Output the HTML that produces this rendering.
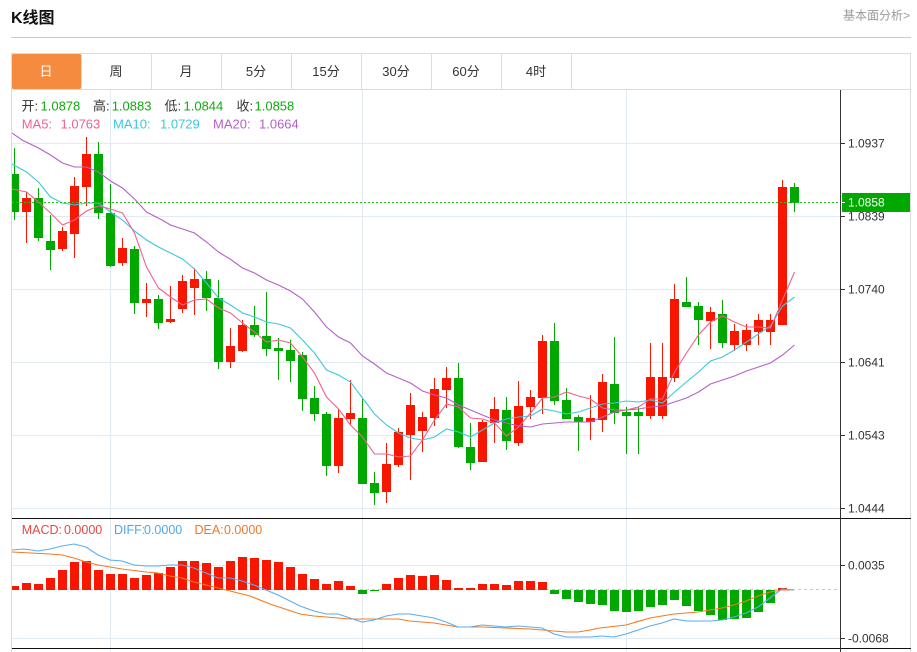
<!DOCTYPE html>
<html lang="zh">
<head>
<meta charset="utf-8">
<title>K线图</title>
<style>
html,body{margin:0;padding:0;background:#fff;width:917px;height:652px;overflow:hidden}
svg{display:block}
text{font-family:"Liberation Sans","Noto Sans CJK SC",sans-serif}
.ax{font-size:12px;fill:#333}
.tab{font-size:13px;fill:#333;text-anchor:middle}
.i{font-size:13px}
.m{font-size:12.5px}
</style>
</head>
<body>
<svg width="917" height="652" viewBox="0 0 917 652" xmlns="http://www.w3.org/2000/svg">
<defs><clipPath id="c"><rect x="12" y="90" width="828" height="562"/></clipPath></defs>

<text x="11" y="23" font-size="16" font-weight="700" fill="#111">K线图</text>
<text x="843" y="19.5" font-size="12" fill="#999">基本面分析&gt;</text>
<path d="M11 37.5H911" stroke="#ccc" fill="none"/>

<!-- tabs -->
<path d="M11.5 652V53.5H910.5V652M12 89.5H910.5M81.5 54V89M151.5 54V89M221.5 54V89M291.5 54V89M361.5 54V89M431.5 54V89M501.5 54V89M571.5 54V89" stroke="#dcdcdc" fill="none"/>
<rect x="12" y="54" width="69" height="35" rx="1.5" fill="#f58b3e"/>
<text class="tab" x="46" y="76" style="fill:#fff">日</text>
<text class="tab" x="116" y="76">周</text>
<text class="tab" x="186" y="76">月</text>
<text class="tab" x="256" y="76">5分</text>
<text class="tab" x="326" y="76">15分</text>
<text class="tab" x="396" y="76">30分</text>
<text class="tab" x="466" y="76">60分</text>
<text class="tab" x="536" y="76">4时</text>

<!-- grid -->
<path d="M12 143.5H840M12 216.5H840M12 289.5H840M12 362.5H840M12 435.5H840M12 508.5H840M12 565.5H840M12 638.5H840M110.5 90V652M362.5 90V652M626.5 90V652" stroke="#e2ebf2" fill="none"/>

<g clip-path="url(#c)" fill="none">
<!-- red candles -->
<path stroke="#f71700" stroke-width="1" d="M26.5 192V243M62.5 227V251M74.5 177V258M86.5 137V206M122.5 238V266M146.5 283V317M170.5 286V323M182.5 275V313M194.5 268V315M230.5 328V368M242.5 320V352M338.5 409V473M350.5 380V425M386.5 443V503M398.5 428V467M410.5 393V480M422.5 412V452M434.5 378V426M446.5 367V408M482.5 420V462M494.5 397V443M518.5 381V446M530.5 390V419M542.5 335V414M590.5 395V440M602.5 374V432M650.5 343V419M662.5 343V419M674.5 284V382M710.5 307V349M734.5 324V351M746.5 324V351M758.5 314V345M770.5 314V345M782.5 180V325"/>
<path stroke="#f71700" stroke-width="9" d="M26.5 198V212M62.5 231V249M74.5 186V234M86.5 154V187M122.5 248V263M146.5 299V303M170.5 319V322M182.5 281V309M194.5 279V288M230.5 346V362M242.5 325V351M338.5 418V466M350.5 413V419M386.5 464V492M398.5 432V465M410.5 405V435M422.5 417V431M434.5 389V418M446.5 378V390M482.5 422V462M494.5 409V423M518.5 406V443M530.5 397V407M542.5 341V398M590.5 418V422M602.5 382V420M650.5 377V416M662.5 377V416M674.5 299V378M710.5 312V321M734.5 331V345M746.5 330V345M758.5 320V332M770.5 320V332M782.5 187V325"/>
<!-- green candles -->
<path stroke="#00a800" stroke-width="1" d="M14.5 148V220M38.5 188V241M50.5 215V270M98.5 142V219M110.5 184V267M134.5 246V314M158.5 295V329M206.5 271V311M218.5 280V369M254.5 306V337M266.5 292V356M278.5 338V380M290.5 340V382M302.5 352V411M314.5 386V421M326.5 412V476M362.5 399V484M374.5 472V505M458.5 363V448M470.5 423V470M506.5 397V450M554.5 323V405M566.5 388V419M578.5 415V451M614.5 337V424M626.5 407V454M638.5 407V454M686.5 277V307M698.5 302V345M722.5 300V348M794.5 183V212"/>
<path stroke="#00a800" stroke-width="9" d="M14.5 174V212M38.5 198V238M50.5 241V250M98.5 154V213M110.5 213V266M134.5 249V303M158.5 299V323M206.5 279V298M218.5 298V362M254.5 325V335M266.5 336V349M278.5 348V351M290.5 350V361M302.5 355V399M314.5 398V414M326.5 414V466M362.5 418V484M374.5 483V493M458.5 378V447M470.5 447V463M506.5 410V441M554.5 341V401M566.5 400V419M578.5 417V422M614.5 384V413M626.5 412V416M638.5 412V416M686.5 302V307M698.5 306V320M722.5 314V343M794.5 187V203"/>
<!-- MA20 -->
<polyline stroke="#b660c8" stroke-width="1.1" points="12,133 22,140 38.5,148 50.5,155 62.5,163 74.5,167 86.5,167 98.5,172 110.5,181 122.5,188 134.5,199 146.5,212 162,220 170.5,225 182.5,229 194.5,233 206.5,242 218.5,252 231.5,260 242.5,268 254.5,273 266.5,280 278.5,285 290.5,291 302.5,299 314.5,312 326.5,327 338.5,337 350.5,343 362.5,356 374.5,364 386.5,373 398.5,378 410.5,383 422.5,391 434.5,395 446.5,398 458.5,405 470.5,410 482.5,415 494.5,420 506.5,423 518.5,426 530.5,427 542.5,424 554.5,423 566.5,422 578.5,422 590.5,422 602.5,417 614.5,412 626.5,410 638.5,409 650.5,407 662.5,406 674.5,402 686.5,398 698.5,392 710.5,384 722.5,380 734.5,376 746.5,371 758.5,367 770.5,363 782.5,355 794.5,345"/>
<!-- MA10 -->
<polyline stroke="#3cc8dc" stroke-width="1.1" points="12,164 26.5,172 38.5,182 50.5,197 62.5,203 74.5,205 86.5,203 98.5,203 110.5,212 122.5,220 134.5,231 146.5,240 158.5,247 170.5,253 182.5,259 194.5,269 206.5,283 218.5,298 230.5,305 242.5,313 254.5,317 266.5,322 278.5,324 290.5,328 302.5,340 314.5,353 326.5,370 338.5,375 350.5,382 362.5,398 374.5,414 386.5,425 398.5,433 410.5,438 422.5,440 434.5,437 446.5,429 458.5,432 470.5,437 482.5,430 494.5,423 506.5,419 518.5,417 530.5,416 542.5,409 554.5,411 566.5,414 578.5,412 590.5,408 602.5,404 614.5,403 626.5,401 638.5,402 650.5,400 662.5,403 674.5,392 686.5,382 698.5,372 710.5,361 722.5,357 734.5,350 746.5,342 758.5,334 770.5,326 782.5,306 794.5,297"/>
<!-- MA5 -->
<polyline stroke="#f0628f" stroke-width="1.1" points="12,189 26.5,192 38.5,202 50.5,213 62.5,225 74.5,220 86.5,211 98.5,206 110.5,209 122.5,213 134.5,233 146.5,267 158.5,288 170.5,297 182.5,305 194.5,300 206.5,299 218.5,308 230.5,313 242.5,323 254.5,332 266.5,342 278.5,340 290.5,343 302.5,357 314.5,373 326.5,397 338.5,409 350.5,425 362.5,437 374.5,454 386.5,454 398.5,457 410.5,456 422.5,440 434.5,420 446.5,404 458.5,407 470.5,418 482.5,419 494.5,423 506.5,436 518.5,427 530.5,413 542.5,398 554.5,397 566.5,392 578.5,396 590.5,399 602.5,408 614.5,410 626.5,410 638.5,407 650.5,399 662.5,399 674.5,372 686.5,353 698.5,335 710.5,322 722.5,316 734.5,322 746.5,327 758.5,327 770.5,328 782.5,300 794.5,272"/>

<!-- MACD zero -->
<path d="M12 589.5H840" stroke="#a9d4ec" stroke-dasharray="3 3"/>
<!-- MACD bars -->
<path stroke="#f71700" stroke-width="9" d="M26.5 583V590M38.5 584V590M50.5 578V590M62.5 570V590M74.5 562V590M86.5 561V590M98.5 570V590M110.5 574V590M122.5 574V590M134.5 578V590M146.5 575V590M158.5 573V590M170.5 567V590M182.5 561V590M194.5 561V590M206.5 563V590M218.5 567V590M230.5 561V590M242.5 557V590M254.5 558V590M266.5 560V590M278.5 562V590M290.5 567V590M302.5 574V590M314.5 579V590M326.5 584V590M338.5 581V590M350.5 586V590M386.5 584V590M398.5 578V590M410.5 575V590M422.5 576V590M434.5 575V590M446.5 580V590M458.5 588V590M470.5 588V590M482.5 584V590M494.5 584V590M506.5 585V590M518.5 581V590M530.5 581V590M542.5 582V590M782.5 588V590"/>
<path stroke="#f71700" stroke-width="7" d="M15.500 586V590"/>
<path stroke="#00a800" stroke-width="9" d="M362.5 590V594M374.5 590V591M554.5 590V594M566.5 590V599M578.5 590V602M590.5 590V604M602.5 590V605M614.5 590V611M626.5 590V612M638.5 590V611M650.5 590V607M662.5 590V605M674.5 590V600M686.5 590V606M698.5 590V611M710.5 590V615M722.5 590V620M734.5 590V619M746.5 590V618M758.5 590V612M770.5 590V603"/>
<!-- DEA -->
<polyline stroke="#f57a20" stroke-width="1.1" points="12,552 50,554 62,555 74,558 86,562 98,565 110,567 122,569 146,572 158,573 170,576 182,578 194,582 206,585 218,588 230,591 250,596 270,604 285,609 300,614 314,616 326,617 350,619 374,619 398,619 410,621 434,623 458,627 482,627 506,628 530,629 554,631 566,632 578,632 590,630 600,628 626,625 650,618 674,614 698,612 722,608 734,605 746,601 758,596 770,592 782,590 794,590"/>
<!-- DIFF -->
<polyline stroke="#5aaef0" stroke-width="1.1" points="12,550 24,549 38,551 50,549 62,546 74,544 86,547 98,555 110,560 122,561 134,565 146,566 158,566 170,565 182,565 194,568 206,573 218,578 230,578 242,581 254,585 266,590 278,595 290,601 300,606 314,611 326,614 338,614 350,618 362,622 374,620 386,616 398,614 410,614 422,616 434,618 446,622 458,627 470,627 482,625 494,626 506,627 518,626 530,627 542,628 554,634 566,637 578,637 590,637 602,636 614,637 626,634 638,630 650,626 662,623 674,619 686,621 698,621 710,621 722,620 734,617 746,613 758,607 770,598 782,589 794,590"/>
<!-- current price line -->
<path d="M12 202.500H840" stroke="#22c022" stroke-dasharray="2 2"/>
</g>

<!-- axis lines -->
<path d="M12 518.500H911M12 648.500H911" stroke="#111" fill="none"/>
<path d="M840.500 90V652" stroke="#333" fill="none"/>
<path d="M841 143.500H845M841 216.500H845M841 289.500H845M841 362.500H845M841 435.500H845M841 508.500H845M841 565.500H845M841 638.500H845" stroke="#333" fill="none"/>

<rect x="842" y="193" width="68" height="19" fill="#00a800"/>
<path d="M841 202.500H845" stroke="#fff"/>
<text class="ax" x="848" y="147.500">1.0937</text>
<text class="ax" x="848" y="220.500">1.0839</text>
<text class="ax" x="848" y="293.500">1.0740</text>
<text class="ax" x="848" y="366.500">1.0641</text>
<text class="ax" x="848" y="439.500">1.0543</text>
<text class="ax" x="848" y="512.500">1.0444</text>
<text class="ax" x="848" y="206.500" style="fill:#fff">1.0858</text>
<text class="ax" x="848" y="569.500">0.0035</text>
<text class="ax" x="848" y="642.500">-0.0068</text>

<!-- info -->
<g class="i">
<text x="21.500" y="110.500" font-size="13" fill="#333">开:</text><text x="40.500" y="110.500" font-size="13" fill="#12a812">1.0878</text>
<text x="93" y="110.500" font-size="13" fill="#333">高:</text><text x="111.700" y="110.500" font-size="13" fill="#12a812">1.0883</text>
<text x="164.500" y="110.500" font-size="13" fill="#333">低:</text><text x="183.500" y="110.500" font-size="13" fill="#12a812">1.0844</text>
<text x="236.500" y="110.500" font-size="13" fill="#333">收:</text><text x="254.500" y="110.500" font-size="13" fill="#12a812">1.0858</text>
<text x="21.700" y="128.500" font-size="13" fill="#f0628f">MA5:</text><text x="60.500" y="128.500" font-size="13" fill="#f0628f">1.0763</text>
<text x="113" y="128.500" font-size="13" fill="#3cc8dc">MA10:</text><text x="160" y="128.500" font-size="13" fill="#3cc8dc">1.0729</text>
<text x="213" y="128.500" font-size="13" fill="#b660c8">MA20:</text><text x="259" y="128.500" font-size="13" fill="#b660c8">1.0664</text>
</g>
<text class="m" x="21.700" y="534" fill="#ee4444">MACD:</text><text class="m" x="64" y="534" fill="#ee4444">0.0000</text>
<text class="m" x="114" y="534" fill="#4ea8ee">DIFF:</text><text class="m" x="144" y="534" fill="#4ea8ee">0.0000</text>
<text class="m" x="194.500" y="534" fill="#f07828">DEA:</text><text class="m" x="224" y="534" fill="#f07828">0.0000</text>
</svg>
</body>
</html>
